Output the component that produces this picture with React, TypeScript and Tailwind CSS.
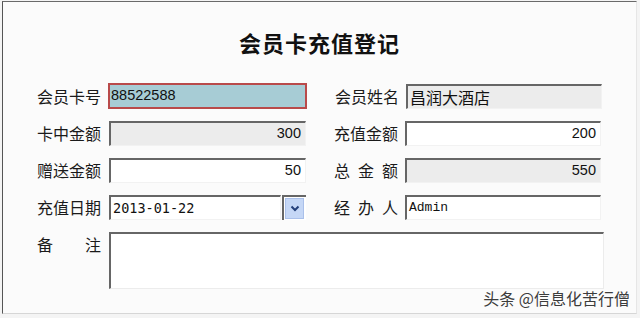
import React from "react";

const cjk = { fontFamily: '"Noto Sans CJK SC", "Noto Sans", sans-serif' };
const sans = { fontFamily: '"Liberation Sans", Arial, sans-serif' };
const mono = { fontFamily: '"Liberation Mono", "Courier New", monospace' };
const dmono = { fontFamily: '"DejaVu Sans Mono", "Liberation Mono", monospace' };

function Label({ chars }: { chars: string[] }) {
  return (
    <div className="w-[64px] flex justify-between text-[16px] leading-[25px] text-[#1a1a1a] shrink-0" style={cjk}>
      {chars.map((c, i) => (
        <span key={i}>{c}</span>
      ))}
    </div>
  );
}

function Field({
  value,
  gray,
  right,
  w,
  font,
  size,
}: {
  value: string;
  gray?: boolean;
  right?: boolean;
  w: string;
  font?: React.CSSProperties;
  size?: string;
}) {
  return (
    <div
      className={`${w} h-[25px] border-t-2 border-l-2 border-t-[#666] border-l-[#666] border-r border-b border-r-[#f2f2f2] border-b-[#f2f2f2] flex items-center ${
        gray ? "bg-[#ececec]" : "bg-white"
      } ${right ? "justify-end pr-[4px]" : "pl-[2px]"} text-[#111] ${size ?? "text-[14.5px]"}`}
      style={font ?? sans}
    >
      {value}
    </div>
  );
}

export default function App() {
  return (
    <div className="w-[640px] h-[318px] bg-[#f4f4f4] relative overflow-hidden">
      <div className="ml-[2px] mt-[1px] w-[635px] h-[313px] border-t border-l border-t-[#6a6a6a] border-l-[#555] border-b border-b-[#d6d6d6] border-r border-r-[#e6e6e6] bg-[#fbfbfb]">
        <div className="h-[81px] flex items-center justify-center">
          <div className="text-[22px] font-bold tracking-[1px] text-[#111]" style={cjk}>
            会员卡充值登记
          </div>
        </div>
        <div className="pl-[34px] flex flex-col gap-[12px]">
          <div className="flex items-center">
            <Label chars={["会", "员", "卡", "号"]} />
            <div className="ml-[7px] w-[199px] h-[26px] border-2 border-[#b94a4a] bg-[#a7ccd5] flex items-center pl-[1px] text-[14.5px] text-[#111]" style={sans}>
              88522588
            </div>
            <div className="ml-[28px]">
              <Label chars={["会", "员", "姓", "名"]} />
            </div>
            <div className="ml-[7px]">
              <Field w="w-[196px]" value="昌润大酒店" gray font={cjk} size="text-[16px]" />
            </div>
          </div>
          <div className="flex items-center">
            <Label chars={["卡", "中", "金", "额"]} />
            <div className="ml-[8px]">
              <Field w="w-[197px]" value="300" gray right />
            </div>
            <div className="ml-[28px]">
              <Label chars={["充", "值", "金", "额"]} />
            </div>
            <div className="ml-[7px]">
              <Field w="w-[196px]" value="200" right />
            </div>
          </div>
          <div className="flex items-center">
            <Label chars={["赠", "送", "金", "额"]} />
            <div className="ml-[8px]">
              <Field w="w-[197px]" value="50" right />
            </div>
            <div className="ml-[28px]">
              <Label chars={["总", "金", "额"]} />
            </div>
            <div className="ml-[7px]">
              <Field w="w-[196px]" value="550" gray right />
            </div>
          </div>
          <div className="flex items-center">
            <Label chars={["充", "值", "日", "期"]} />
            <div className="ml-[8px] flex gap-[1px]">
              <Field w="w-[172px]" value="2013-01-22" font={dmono} size="text-[13.5px]" />
              <div className="w-[24px] h-[25px] border-t-2 border-l-2 border-t-[#666] border-l-[#666] bg-white flex items-start p-[1px]">
                <div className="w-[19px] h-[21px] bg-[#c5d7f6] border border-[#aac0ea] flex items-center justify-center">
                  <svg width="10" height="7" viewBox="0 0 10 7">
                    <path d="M1.5 1.5 L5 5 L8.5 1.5" fill="none" stroke="#24407a" strokeWidth="2" />
                  </svg>
                </div>
              </div>
            </div>
            <div className="ml-[28px]">
              <Label chars={["经", "办", "人"]} />
            </div>
            <div className="ml-[7px]">
              <Field w="w-[196px]" value="Admin" font={mono} size="text-[13px]" />
            </div>
          </div>
          <div className="flex items-start">
            <div className="pt-[0px]">
              <Label chars={["备", "注"]} />
            </div>
            <div className="ml-[8px] w-[495px] h-[57px] border-t-2 border-l-2 border-t-[#666] border-l-[#666] border-r border-b border-r-[#ececec] border-b-[#ececec] bg-white" />
          </div>
        </div>
      </div>
      <div
        className="absolute right-[10px] top-[287px] text-[16px] text-[#3c3c3c] leading-[22px]"
        style={{ ...cjk, textShadow: "0 0 2px #ffffff, 0 0 1px #ffffff" }}
      >
        头条 @信息化苦行僧
      </div>
    </div>
  );
}
